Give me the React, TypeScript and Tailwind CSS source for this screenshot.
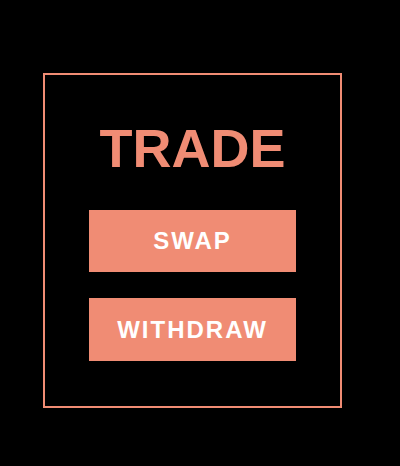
export default function App() {
  return (
    <div className="w-[400px] h-[466px] bg-black pt-[73px] pl-[43px]" style={{ fontFamily: '"Liberation Sans", Arial, sans-serif' }}>
      <div className="w-[299px] h-[335px] border-2 border-[#f08c74] flex flex-col items-center">
        <h1 className="mt-[46px] text-[54px] leading-none font-bold text-[#f08c74]">TRADE</h1>
        <button className="mt-[35px] w-[207px] h-[62px] bg-[#f08c74] text-white font-bold text-[24px] tracking-[2px] flex items-center justify-center">
          SWAP
        </button>
        <button className="mt-[26px] w-[207px] h-[63px] bg-[#f08c74] text-white font-bold text-[24px] tracking-[2px] flex items-center justify-center">
          WITHDRAW
        </button>
      </div>
    </div>
  );
}
